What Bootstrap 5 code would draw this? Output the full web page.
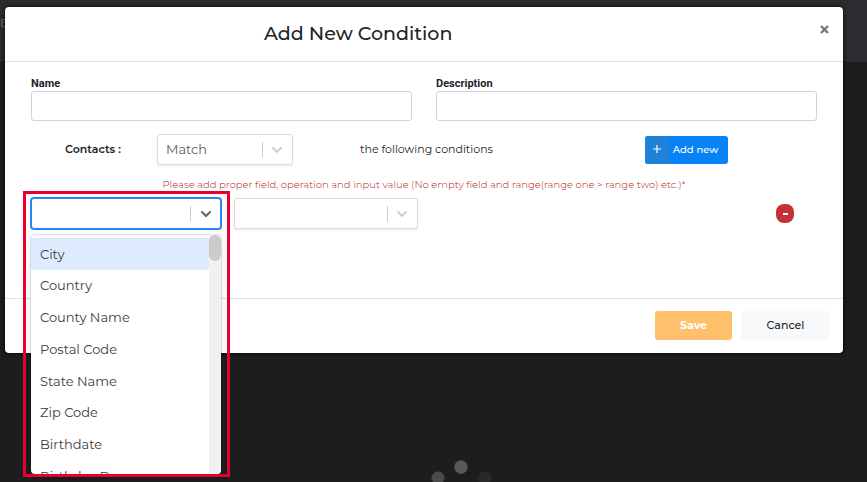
<!DOCTYPE html>
<html lang="en">
<head>
<meta charset="utf-8">
<meta name="viewport" content="width=device-width, initial-scale=1">
<title>Add New Condition</title>
<link rel="stylesheet" href="https://cdn.jsdelivr.net/npm/bootstrap@5.3.0/dist/css/bootstrap.min.css">
<style>
body { background: #1c1d1f; color: #212529; font-family: Montserrat, Inter, sans-serif; font-size: 11px; }
.backdrop-bar { background: #2b2c2f; color: #77787a; height: 62px; font-size: 12px; line-height: 46px; z-index: -1; }
.dialog { border: 0; border-radius: 4px; margin: 7px 24px 0 5px; box-shadow: 0 0 4px #000; }
.dialog-head { height: 55px; border-bottom: 1px solid #dee2e6; }
.dialog-title { font-size: 19px; line-height: 24px; font-weight: 500; padding-left: 8px; }
.close-x { border: 0; background: none; padding: 0; margin-right: 14px; line-height: 0; }
.dialog-main { padding: 14px 26px 0; height: 236px; }
.fields { --bs-gutter-x: 24px; --bs-gutter-y: 0; }
.field-label { font: 700 11px/15px Roboto, sans-serif; display: block; }
.field-input { height: 30px; border: 1px solid #ced4da; border-radius: 3px; padding: 4px 8px; font-size: 12px; }
.match-row { display: grid; grid-template-columns: 126fr 203fr 285fr 172fr; align-items: center; margin-top: 13px; }
.match-row .row-label { padding-left: 34px; font-weight: 600; }
.picker { display: grid; align-items: center; height: 31px; }
.picker > select, .picker > .picker-mark { grid-area: 1 / 1; }
.picker > select { appearance: none; width: 100%; height: 31px; border: 1px solid #dcdcdc; border-radius: 3px; background: #fff; padding: 0 40px 0 8px; font-size: 13px; color: #5c5c5c; box-shadow: 0 1px 2px rgba(0,0,0,.1); outline: 0; }
.picker-mark { justify-self: end; pointer-events: none; color: #ccc; z-index: 1; }
.picker.is-open > select { border-color: #2684ff; box-shadow: 0 0 0 1px #2684ff; }
.picker.is-open .chev { color: #666; }
.w-match { width: 136px; }
.w-field { width: 190px; }
.w-oper { width: 184px; }
.add-btn { border: 0; border-radius: 3px; background: #0883f5; color: #fff; height: 28px; width: 83px; padding: 0; font-size: 10px; font-weight: 500; overflow: hidden; }
.add-btn .plus { background: #2081da; width: 24px; }
.add-btn .add-text { padding-right: 6px; }
.warn { color: #b81a20; font-size: 10px; line-height: 14px; font-weight: 300; margin-top: 13px; }
.cond-row { margin-top: 6px; gap: 13px; padding-right: 23px; }
.remove-btn { border: 0; padding: 0; width: 18px; height: 19px; border-radius: 8px; background: #c33236; }
.remove-btn span { width: 5px; height: 2px; background: #fff; }
.option-menu { top: 37px; left: 0; width: 100%; height: 239px; background: #fff; border-radius: 4px; box-shadow: 0 0 0 1px rgba(0,0,0,.1), 0 4px 11px rgba(0,0,0,.1); overflow: hidden; z-index: 5; }
.option-list { display: flex; flex-direction: column; height: 257px; margin: 0; padding: 3px 0 0; list-style: none; font-size: 13px; color: #3c3c3c; }
.option-list li { flex: 1 1 0; display: flex; align-items: center; padding: 1px 0 0 9px; white-space: nowrap; }
.option-list li[aria-selected="true"] { background: #deebff; }
.track { width: 12px; background: #f1f1f1; }
.thumb { height: 26px; border-radius: 6px; background: #cbcbcb; }
.callout-frame { top: -7px; left: -8px; right: -9px; height: 286px; border: 3px solid #e8002b; z-index: 6; pointer-events: none; }
.dialog-foot { border-top: 1px solid #dee2e6; padding: 12px 13px 13px; gap: 9px; }
.foot-btn { border: 0; border-radius: 3px; height: 29px; font-size: 11px; padding: 0; }
.save-btn { width: 77px; background: #ffc06c; color: #fff; font-weight: 700; }
.cancel-btn { width: 89px; background: #f8f9fa; color: #212529; font-weight: 500; }
.loader { top: 459px; left: 50%; overflow: visible; }
</style>
<script src="https://cdn.jsdelivr.net/npm/bootstrap@5.3.0/dist/js/bootstrap.bundle.min.js"></script>
</head>
<body class="position-relative overflow-hidden min-vh-100">
<div class="backdrop-bar position-absolute top-0 start-0 w-100" aria-hidden="true">E</div>
<div class="position-relative">
  <section class="dialog bg-white" role="dialog" aria-labelledby="dlg-title">
    <header class="dialog-head d-flex align-items-center">
      <h1 class="dialog-title col-10 text-center mb-0" id="dlg-title">Add New Condition</h1>
      <button type="button" class="close-x ms-auto" aria-label="Close">
        <svg width="9" height="20" viewBox="0 0 9 20"><path d="M1 2l7 7M8 2l-7 7" stroke="#777" stroke-width="2.4"/></svg>
      </button>
    </header>
    <div class="dialog-main">
      <div class="row fields">
        <div class="col-6">
          <label class="field-label" for="name">Name</label>
          <input class="form-control field-input" id="name" type="text">
        </div>
        <div class="col-6">
          <label class="field-label" for="desc">Description</label>
          <input class="form-control field-input" id="desc" type="text">
        </div>
      </div>
      <div class="match-row">
        <label class="row-label" for="match">Contacts :</label>
        <div class="picker w-match">
          <select id="match"><option>Match</option></select>
          <svg class="picker-mark" width="31" height="18" viewBox="0 0 31 18"><path d="M.5 1v16" stroke="#ccc"/><path class="chev" d="M11 7l4 4 4-4" fill="none" stroke="currentColor" stroke-width="1.8" stroke-linecap="round"/></svg>
        </div>
        <span>the following conditions</span>
        <button type="button" class="add-btn d-flex">
          <span class="plus h-100 d-flex align-items-center justify-content-center"><svg width="8" height="10" viewBox="0 0 8 10"><path d="M4 0v8M0 4h8" stroke="#fff" stroke-width="1.2"/></svg></span>
          <span class="add-text flex-grow-1 align-self-center">Add new</span>
        </button>
      </div>
      <p class="warn text-center mb-0">Please add proper field, operation and input value (No empty field and range(range one &gt; range two) etc.)*</p>
      <div class="cond-row d-flex align-items-center">
        <div class="position-relative w-field">
          <div class="picker is-open">
            <select aria-label="Field"><option></option></select>
            <svg class="picker-mark" width="31" height="18" viewBox="0 0 31 18"><path d="M.5 1v16" stroke="#ccc"/><path class="chev" d="M12 7l4 4 4-4" fill="none" stroke="currentColor" stroke-width="2" stroke-linecap="round"/></svg>
          </div>
          <div class="option-menu position-absolute d-flex">
            <ul class="option-list flex-grow-1" role="listbox" aria-label="Fields">
              <li role="option" aria-selected="true">City</li>
              <li role="option">Country</li>
              <li role="option">County Name</li>
              <li role="option">Postal Code</li>
              <li role="option">State Name</li>
              <li role="option">Zip Code</li>
              <li role="option">Birthdate</li>
              <li role="option">Birthday Day</li>
            </ul>
            <div class="track"><div class="thumb"></div></div>
          </div>
          <div class="callout-frame position-absolute"></div>
        </div>
        <div class="picker w-oper">
          <select aria-label="Operation"><option></option></select>
          <svg class="picker-mark" width="31" height="18" viewBox="0 0 31 18"><path d="M.5 1v16" stroke="#ccc"/><path class="chev" d="M11 7l4 4 4-4" fill="none" stroke="currentColor" stroke-width="1.8" stroke-linecap="round"/></svg>
        </div>
        <button type="button" class="remove-btn ms-auto d-flex align-items-center justify-content-center" aria-label="Remove condition"><span></span></button>
      </div>
    </div>
    <footer class="dialog-foot d-flex justify-content-end">
      <button type="button" class="foot-btn save-btn">Save</button>
      <button type="button" class="foot-btn cancel-btn">Cancel</button>
    </footer>
  </section>
</div>
<svg class="loader position-absolute" width="68" height="40" viewBox="0 0 68 40" aria-hidden="true">
  <circle cx="4" cy="19" r="6.5" fill="#4a4a4a"/><circle cx="27" cy="8" r="6.7" fill="#595959"/><circle cx="51" cy="19" r="6.5" fill="#292a2c"/>
</svg>
</body>
</html>
